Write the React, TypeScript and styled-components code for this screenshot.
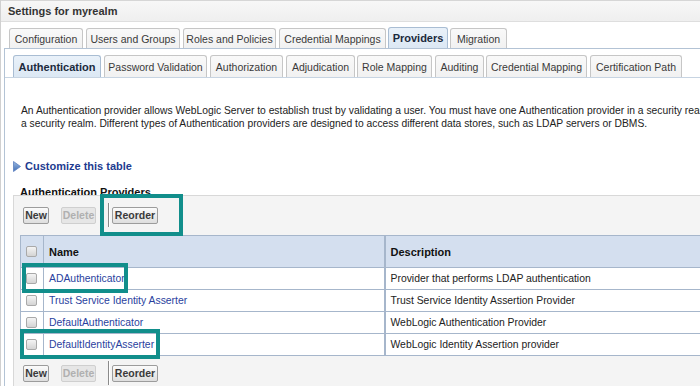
import * as React from "react";
import styled, { createGlobalStyle } from "styled-components";

const colors = {
  teal: "#118e8b",
  link: "#2a3f9e",
  linkBold: "#1d3b8f",
  text: "#222222",
  tabBorder: "#c6c6c6",
  tabBg: "#f1f1f1",
  tabActiveBg: "#dce8f4",
  tabActiveBorder: "#a9bdd3",
  panelLine: "#b3c3d5",
  headerBg: "#d4dfef",
  gridLine: "#a6b6cb",
  areaBg: "#f4f4f4",
};

const GlobalStyle = createGlobalStyle`
  html, body {
    margin: 0;
    padding: 0;
    background: #ffffff;
    overflow: hidden;
  }
  body {
    font-family: "Liberation Sans", Arial, sans-serif;
    font-size: 10px;
    color: ${colors.text};
  }
`;

const Page = styled.div`
  width: 780px;
  height: 386px;
  border-left: 1px solid #d0d0d0;
  overflow: hidden;
`;

const TitleBar = styled.div`
  height: 22px;
  box-sizing: border-box;
  display: flex;
  align-items: center;
  padding-left: 7px;
  border-top: 1px solid #d6d6d6;
  border-bottom: 1px solid #dedede;
  background: linear-gradient(#f7f7f7, #efefef);
  font-size: 11px;
  font-weight: bold;
  color: #333;
`;

const Body = styled.div`
  padding: 6px 0 0 3px;
`;

const TabRow = styled.div<{ $indent: number; $h: number }>`
  display: flex;
  align-items: flex-end;
  height: ${(p) => p.$h}px;
  padding-left: ${(p) => p.$indent}px;
`;

const Tab = styled.div<{ $active?: boolean; $w: number; $h: number; $gap: number }>`
  flex: none;
  width: ${(p) => p.$w}px;
  height: ${(p) => p.$h}px;
  margin-right: ${(p) => p.$gap}px;
  box-sizing: border-box;
  display: flex;
  align-items: center;
  justify-content: center;
  border: 1px solid ${(p) => (p.$active ? colors.tabActiveBorder : colors.tabBorder)};
  border-bottom: none;
  border-radius: 3px 3px 0 0;
  background: ${(p) =>
    p.$active
      ? `linear-gradient(#e9f1f9, ${colors.tabActiveBg})`
      : `linear-gradient(#f9f9f9, ${colors.tabBg})`};
  font-size: ${(p) => (p.$active ? "11px" : "10.5px")};
  font-weight: ${(p) => (p.$active ? "bold" : "normal")};
  color: ${(p) => (p.$active ? "#1b2a3c" : "#3a3a3a")};
  white-space: nowrap;
`;

const Panel = styled.div`
  border-top: 1px solid ${colors.panelLine};
  border-left: 1px solid ${colors.panelLine};
  padding-top: 6px;
  min-height: 400px;
`;

const SubTabs = styled(TabRow)`
  border-bottom: 1px solid #c7d4e2;
`;

const Intro = styled.p`
  margin: 26px 0 0 16px;
  line-height: 13px;
  font-size: 10.3px;
  color: #222;
  white-space: nowrap;
`;

const Customize = styled.div`
  display: flex;
  align-items: center;
  gap: 4px;
  margin: 29px 0 0 8px;
  height: 14px;
  font-size: 11px;
  font-weight: bold;
  color: ${colors.linkBold};
`;

const SectionTitle = styled.div`
  margin: 13px 0 0 15px;
  height: 9px;
  line-height: 12px;
  font-size: 11px;
  font-weight: bold;
  color: #111;
`;

const TableArea = styled.div`
  position: relative;
  margin-left: 8px;
  border-top: 1px solid #d8d8d8;
  border-left: 1px solid #d8d8d8;
  background: ${colors.areaBg};
  padding: 5px 0 0 6px;
  height: 200px;
`;

const Toolbar = styled.div`
  display: flex;
  align-items: center;
  height: 28px;
  padding-left: 3px;
`;

const Button = styled.div<{ $disabled?: boolean; $w: number }>`
  width: ${(p) => p.$w}px;
  height: 17px;
  box-sizing: border-box;
  display: flex;
  align-items: center;
  justify-content: center;
  border: 1px solid ${(p) => (p.$disabled ? "#cfcfcf" : "#9c9c9c")};
  border-radius: 2px;
  background: ${(p) =>
    p.$disabled ? "#e6e6e6" : "linear-gradient(#fbfbfb, #dedede)"};
  font-size: 10.5px;
  font-weight: bold;
  color: ${(p) => (p.$disabled ? "#b0b0b0" : "#3a3a3a")};
  margin-right: 12px;
`;

const Separator = styled.div`
  width: 1px;
  height: 24px;
  background: #8a8a8a;
  border-right: 1px solid #ffffff;
  margin-right: 2px;
`;

const Grid = styled.table`
  width: 760px;
  border-collapse: collapse;
  margin-top: 6px;
  margin-bottom: 3px;
  background: #fff;
  table-layout: fixed;
`;

const HeadCell = styled.th<{ $w?: number; $thick?: boolean }>`
  ${(p) => (p.$w ? `width: ${p.$w}px;` : "")}
  height: 32px;
  box-sizing: border-box;
  padding: 0 0 0 5px;
  text-align: left;
  background: ${colors.headerBg};
  border: 1px solid ${colors.gridLine};
  border-left: ${(p) => (p.$thick ? "2px" : "1px")} solid ${colors.gridLine};
  font-size: 11px;
  font-weight: bold;
  color: #111;
`;

const Cell = styled.td<{ $thick?: boolean }>`
  height: 22px;
  box-sizing: border-box;
  padding: 0 0 0 5px;
  border: 1px solid ${colors.gridLine};
  border-left: ${(p) => (p.$thick ? "2px" : "1px")} solid ${colors.gridLine};
  font-size: 10.4px;
  color: #222;
  white-space: nowrap;
`;

const Link = styled.span`
  color: ${colors.link};
`;

const Check = styled.span`
  display: block;
  width: 11px;
  height: 11px;
  box-sizing: border-box;
  border: 1px solid #a9a9a9;
  border-radius: 2px;
  background: linear-gradient(#f4f4f4, #d4d4d4);
`;

const Highlight = styled.div<{ $x: number; $y: number; $w: number; $h: number }>`
  position: absolute;
  left: ${(p) => p.$x}px;
  top: ${(p) => p.$y}px;
  width: ${(p) => p.$w}px;
  height: ${(p) => p.$h}px;
  box-sizing: border-box;
  border: 4px solid ${colors.teal};
  pointer-events: none;
`;

const mainTabs = [
  { label: "Configuration", w: 74, gap: 3 },
  { label: "Users and Groups", w: 94, gap: 3 },
  { label: "Roles and Policies", w: 93, gap: 3 },
  { label: "Credential Mappings", w: 107, gap: 2 },
  { label: "Providers", w: 60, gap: 2, active: true },
  { label: "Migration", w: 57, gap: 2 },
];

const subTabs = [
  { label: "Authentication", w: 88, gap: 3, active: true },
  { label: "Password Validation", w: 103, gap: 3 },
  { label: "Authorization", w: 73, gap: 3 },
  { label: "Adjudication", w: 69, gap: 2 },
  { label: "Role Mapping", w: 75, gap: 3 },
  { label: "Auditing", w: 49, gap: 2 },
  { label: "Credential Mapping", w: 101, gap: 3 },
  { label: "Certification Path", w: 92, gap: 3 },
];

const providers = [
  { name: "ADAuthenticator", desc: "Provider that performs LDAP authentication" },
  { name: "Trust Service Identity Asserter", desc: "Trust Service Identity Assertion Provider" },
  { name: "DefaultAuthenticator", desc: "WebLogic Authentication Provider" },
  { name: "DefaultIdentityAsserter", desc: "WebLogic Identity Assertion provider" },
];

const ButtonBar = () => (
  <Toolbar>
    <Button $w={26}>New</Button>
    <Button $w={35} $disabled>
      Delete
    </Button>
    <Separator />
    <Button $w={46}>Reorder</Button>
  </Toolbar>
);

export default function App() {
  return (
    <Page>
      <GlobalStyle />
      <TitleBar>Settings for myrealm</TitleBar>
      <Body>
        <TabRow $indent={5} $h={20}>
          {mainTabs.map((t) => (
            <Tab key={t.label} $w={t.w} $h={t.active ? 21 : 20} $gap={t.gap} $active={t.active}>
              {t.label}
            </Tab>
          ))}
        </TabRow>
        <Panel>
          <SubTabs $indent={8} $h={22}>
            {subTabs.map((t) => (
              <Tab key={t.label} $w={t.w} $h={22} $gap={t.gap} $active={t.active}>
                {t.label}
              </Tab>
            ))}
          </SubTabs>
          <Intro>
            An Authentication provider allows WebLogic Server to establish trust by validating a
            user. You must have one Authentication provider in a security realm, and you can
            configure multiple Authentication providers in
            <br />a security realm. Different types of Authentication providers are designed to
            access different data stores, such as LDAP servers or DBMS.
          </Intro>
          <Customize>
            <svg width="8" height="11" viewBox="0 0 8 11">
              <defs>
                <linearGradient id="tri" x1="0" y1="0" x2="0" y2="1">
                  <stop offset="0" stopColor="#9ab8e0" />
                  <stop offset="1" stopColor="#416fb5" />
                </linearGradient>
              </defs>
              <path d="M0.5 0.5 L7.5 5.5 L0.5 10.5 Z" fill="url(#tri)" stroke="#5a7fbf" strokeWidth="0.8" />
            </svg>
            Customize this table
          </Customize>
          <SectionTitle>Authentication Providers</SectionTitle>
          <TableArea>
            <ButtonBar />
            <Grid>
              <thead>
                <tr>
                  <HeadCell $w={23}>
                    <Check />
                  </HeadCell>
                  <HeadCell $w={341}>Name</HeadCell>
                  <HeadCell $thick>Description</HeadCell>
                </tr>
              </thead>
              <tbody>
                {providers.map((p) => (
                  <tr key={p.name}>
                    <Cell>
                      <Check />
                    </Cell>
                    <Cell>
                      <Link>{p.name}</Link>
                    </Cell>
                    <Cell $thick>{p.desc}</Cell>
                  </tr>
                ))}
              </tbody>
            </Grid>
            <ButtonBar />
            <Highlight $x={86} $y={-2} $w={83} $h={42} />
            <Highlight $x={8} $y={67} $w={106} $h={30} />
            <Highlight $x={6} $y={133} $w={140} $h={30} />
          </TableArea>
        </Panel>
      </Body>
    </Page>
  );
}
